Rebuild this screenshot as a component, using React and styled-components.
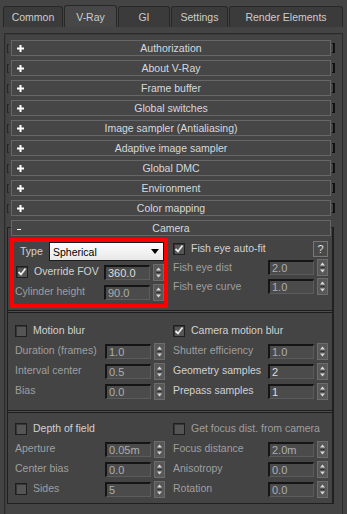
import React from "react";
import styled, { createGlobalStyle } from "styled-components";

const GlobalStyle = createGlobalStyle`
  html, body {
    margin: 0;
    padding: 0;
    background: #444444;
  }
  body {
    font-family: "Liberation Sans", Arial, sans-serif;
    font-size: 10.5px;
    color: #d0d0d0;
    overflow: hidden;
  }
  * {
    box-sizing: border-box;
  }
`;

const ON = "#d2d2d2";
const OFF = "#9f9f9f";

const TabBar = styled.div`
  display: flex;
  align-items: flex-end;
  gap: 1px;
  height: 27px;
  padding-left: 3px;
`;

const Tab = styled.div`
  width: ${(p) => p.$w}px;
  height: ${(p) => (p.$active ? 22 : 21)}px;
  display: flex;
  align-items: center;
  justify-content: center;
  background: ${(p) => (p.$active ? "#474747" : "#3b3b3b")};
  border: 1px solid #272727;
  border-bottom: none;
  border-radius: 3px 3px 0 0;
  color: #cdcdcd;
  font-size: 10.5px;
`;

const Panel = styled.div`
  margin: 6px 4px 0 4px;
  height: 500px;
  border: 1px solid #2b2b2b;
  box-shadow: inset 1px 1px 0 #3c3c3c;
  padding: 6px 7px 0 2px;
`;

const RolloutList = styled.div`
  display: flex;
  flex-direction: column;
  gap: 4px;
`;

const RolloutRow = styled.div`
  display: flex;
  align-items: center;
  height: 16px;
`;

const LeftBracket = styled.span`
  width: 2px;
  height: 9px;
  border: 1px solid #262626;
  border-right: none;
  margin-right: 2px;
`;

const RightBracket = styled.span`
  width: 3px;
  height: 10px;
  border: 1px solid #111;
  border-left: none;
  border-right-width: 2px;
  margin-left: 1px;
`;

const Header = styled.div`
  position: relative;
  z-index: 1;
  width: 320px;
  height: 16px;
  margin-left: ${(p) => p.$indent || 0}px;
  display: grid;
  grid-template-columns: 18px 1fr 18px;
  align-items: center;
  border: 1px solid #666;
  background: #464646;
  color: #d6d9de;
  font-size: 10.5px;
  text-align: center;
`;

const Sign = styled.span`
  display: flex;
  align-items: center;
  padding-left: 5px;
`;

const CameraBlock = styled.div`
  position: relative;
  width: 327px;
  padding: 0 2px 1px 1px;
  &::before {
    content: "";
    position: absolute;
    top: 7px;
    left: 0;
    right: 0;
    bottom: 0;
    border: 1px solid #202020;
    border-right-width: 2px;
    pointer-events: none;
  }
`;

const Separator = styled.div`
  height: 3px;
  border-top: 1px solid #1d1d1d;
  border-bottom: 1px solid #1d1d1d;
  background: #4e4e4e;
`;

const TopSection = styled.div`
  display: grid;
  grid-template-columns: 158px 1fr;
  column-gap: 5px;
  padding: 2px 4px 2px 2px;
`;

const Section = styled.div`
  display: grid;
  grid-template-columns: 150px 1fr;
  column-gap: 8px;
  padding: ${(p) => p.$pad};
`;

const RedBox = styled.div`
  border: 4px solid #ff0000;
  padding: 0 0 3px 1px;
  display: flex;
  flex-direction: column;
  gap: 2px;
`;

const Column = styled.div`
  display: flex;
  flex-direction: column;
  gap: ${(p) => p.$gap || 2}px;
  padding-top: ${(p) => p.$top || 0}px;
`;

const Row = styled.div`
  display: flex;
  align-items: center;
  height: ${(p) => p.$h || 18}px;
`;

const Label = styled.span`
  flex: 1;
  color: ${(p) => (p.$on ? ON : OFF)};
  white-space: nowrap;
  margin-left: ${(p) => p.$ml || 0}px;
  padding-bottom: 2px;
`;

const NumInput = styled.div`
  width: ${(p) => p.$w || 46}px;
  height: 15px;
  background: #4b4b4b;
  border-top: 2px solid #151515;
  border-left: 2px solid #151515;
  border-bottom: 1px solid #5c5c5c;
  border-right: 1px solid #5c5c5c;
  color: ${(p) => (p.$on ? "#dedede" : "#adadad")};
  font-size: 11px;
  line-height: 12px;
  padding-left: 2px;
`;

const SpinBox = styled.div`
  display: flex;
  margin-left: 3px;
`;

const Box = styled.span`
  width: 12px;
  height: 12px;
  flex: none;
  display: flex;
  align-items: center;
  justify-content: center;
  margin-left: ${(p) => p.$ml || 0}px;
  background: #555;
  border: 1px solid #1f1f1f;
  box-shadow: inset 1px 1px 0 #363636;
`;

const Select = styled.div`
  width: 115px;
  height: 19px;
  display: flex;
  align-items: center;
  justify-content: space-between;
  background: linear-gradient(#fdfdfd, #e8e8e8);
  border: 1px solid #1a1a1a;
  color: #000;
  font-size: 10.5px;
  padding: 0 4px 0 3px;
`;

const HelpButton = styled.div`
  width: 15px;
  height: 16px;
  display: flex;
  align-items: center;
  justify-content: center;
  border: 1px solid #777;
  background: #4a4a4a;
  color: #e0e0e0;
  font-size: 11px;
`;

function Plus() {
  return (
    <svg width="7" height="7" viewBox="0 0 7 7">
      <path d="M0 3.5H7M3.5 0V7" stroke="#fff" strokeWidth="2" />
    </svg>
  );
}

function Minus() {
  return (
    <svg width="5" height="7" viewBox="0 0 5 7">
      <path d="M0 4.5H4" stroke="#fff" strokeWidth="1" />
    </svg>
  );
}

function Spinner() {
  return (
    <SpinBox>
      <svg width="11" height="17" viewBox="0 0 11 17">
        <rect x="0.5" y="0.5" width="10" height="16" fill="#585858" stroke="#6c6c6c" />
        <path d="M3 6.5L5.5 3.5L8 6.5Z" fill="#d8d8d8" />
        <path d="M3.5 8.5H7.5" stroke="#2e2e2e" />
        <path d="M3 10.5L5.5 13.5L8 10.5Z" fill="#d8d8d8" />
      </svg>
    </SpinBox>
  );
}

function Check({ checked, ml }) {
  return (
    <Box $ml={ml}>
      {checked && (
        <svg width="10" height="10" viewBox="0 0 10 10">
          <path d="M1.5 5L4 7.5L8.5 1.5" fill="none" stroke="#ececec" strokeWidth="1.8" />
        </svg>
      )}
    </Box>
  );
}

function Field({ label, value, on, h, box }) {
  return (
    <Row $h={h}>
      {box && <Check />}
      <Label $on={on} $ml={box ? 6 : 0}>
        {label}
      </Label>
      <NumInput $on={on}>{value}</NumInput>
      <Spinner />
    </Row>
  );
}

function CheckRow({ label, checked, on = true, h, ml, children }) {
  return (
    <Row $h={h}>
      <Check checked={checked} ml={ml} />
      <Label $on={on} $ml={6}>
        {label}
      </Label>
      {children}
    </Row>
  );
}

const rollouts = [
  "Authorization",
  "About V-Ray",
  "Frame buffer",
  "Global switches",
  "Image sampler (Antialiasing)",
  "Adaptive image sampler",
  "Global DMC",
  "Environment",
  "Color mapping",
];

const tabs = [
  { name: "Common", w: 60 },
  { name: "V-Ray", w: 53, active: true },
  { name: "GI", w: 52 },
  { name: "Settings", w: 57 },
  { name: "Render Elements", w: 114 },
];

export default function App() {
  return (
    <>
      <GlobalStyle />
      <TabBar>
        {tabs.map((t) => (
          <Tab key={t.name} $w={t.w} $active={t.active}>
            {t.name}
          </Tab>
        ))}
      </TabBar>
      <Panel>
        <RolloutList>
          {rollouts.map((r) => (
            <RolloutRow key={r}>
              <LeftBracket />
              <Header>
                <Sign>
                  <Plus />
                </Sign>
                <span>{r}</span>
                <span />
              </Header>
              <RightBracket />
            </RolloutRow>
          ))}
          <CameraBlock>
            <Header $indent={3}>
              <Sign>
                <Minus />
              </Sign>
              <span>Camera</span>
              <span />
            </Header>
            <TopSection>
              <RedBox>
                <Row $h={19}>
                  <Label $on $ml={5}>
                    Type
                  </Label>
                  <Select>
                    <span>Spherical</span>
                    <svg width="8" height="5" viewBox="0 0 8 5">
                      <path d="M0 0H8L4 5Z" fill="#000" />
                    </svg>
                  </Select>
                </Row>
                <CheckRow label="Override FOV" checked ml={1}>
                  <NumInput $on>360.0</NumInput>
                  <Spinner />
                </CheckRow>
                <Field label="Cylinder height" value="90.0" />
              </RedBox>
              <Column $top={2} $gap={2}>
                <CheckRow label="Fish eye auto-fit" checked h={17}>
                  <HelpButton>?</HelpButton>
                </CheckRow>
                <Field label="Fish eye dist" value="2.0" h={17} />
                <Field label="Fish eye curve" value="1.0" h={17} />
              </Column>
            </TopSection>
            <Separator />
            <Section $pad="9px 4px 10px 7px">
              <Column>
                <CheckRow label="Motion blur" />
                <Field label="Duration (frames)" value="1.0" />
                <Field label="Interval center" value="0.5" />
                <Field label="Bias" value="0.0" />
              </Column>
              <Column>
                <CheckRow label="Camera motion blur" checked />
                <Field label="Shutter efficiency" value="1.0" />
                <Field label="Geometry samples" value="2" on />
                <Field label="Prepass samples" value="1" on />
              </Column>
            </Section>
            <Separator />
            <Section $pad="7px 4px 5px 7px">
              <Column>
                <CheckRow label="Depth of field" />
                <Field label="Aperture" value="0.05m" />
                <Field label="Center bias" value="0.0" />
                <Field label="Sides" value="5" box />
              </Column>
              <Column>
                <CheckRow label="Get focus dist. from camera" on={false} />
                <Field label="Focus distance" value="2.0m" />
                <Field label="Anisotropy" value="0.0" />
                <Field label="Rotation" value="0.0" />
              </Column>
            </Section>
          </CameraBlock>
        </RolloutList>
      </Panel>
    </>
  );
}
